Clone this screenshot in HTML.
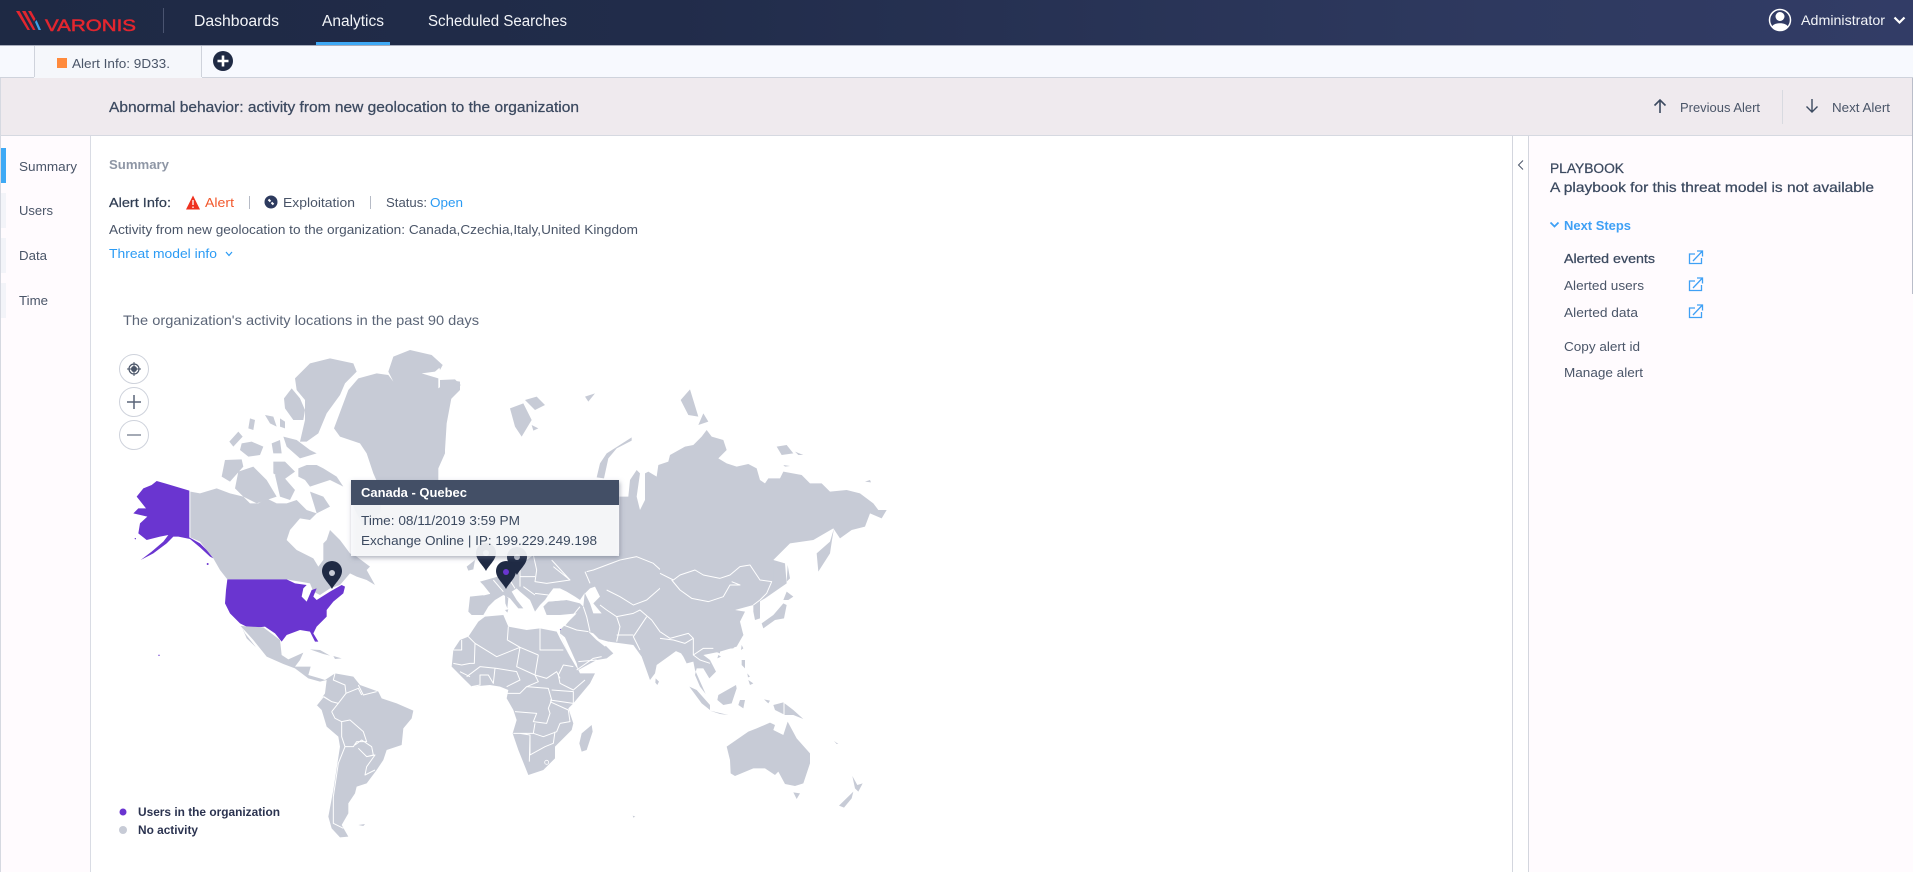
<!DOCTYPE html>
<html lang="en"><head><meta charset="utf-8"><title>Alert Info</title>
<style>
html,body{margin:0;padding:0;background:#fff;width:1913px;height:872px;overflow:hidden}
svg{display:block}
text{font-family:"Liberation Sans",Arial,sans-serif;font-size:13px;fill:#4a5568}
.n{font-size:15.5px;fill:#f2f4f8}
.d{fill:#3c4a60}
.m{stroke:#3c4a60;stroke-width:.25}
.b{font-weight:bold}
.l{fill:#2b9bf4}
.land{fill:#c7cbd6}
.sea{fill:#fff}
.br{fill:none;stroke:#fff;stroke-width:3;stroke-linejoin:round}
.pu{fill:#6a35d0}
.pin{fill:#1f2a44}
</style></head><body>
<svg width="1913" height="872" viewBox="0 0 1913 872" xmlns="http://www.w3.org/2000/svg">
<defs>
<linearGradient id="hg" x1="0" x2="1" y1="0" y2="0"><stop offset="0" stop-color="#1e2944"/><stop offset=".35" stop-color="#212c4a"/><stop offset=".78" stop-color="#2e395f"/><stop offset="1" stop-color="#323c66"/></linearGradient>
<filter id="sh" x="-10%" y="-20%" width="120%" height="140%"><feDropShadow dx="1" dy="2" stdDeviation="2.5" flood-color="#5a6278" flood-opacity=".55"/></filter>
<path id="pinp" d="M0,17C-3,11 -10,6 -10,-1A10,10 0 1 1 10,-1C10,6 3,11 0,17Z"/>
</defs>

<!-- panels -->
<rect width="1913" height="872" fill="#fff"/>
<rect y="0" width="1913" height="45" fill="url(#hg)"/>
<rect y="45" width="1913" height="1" fill="#a9aebd"/>
<rect y="46" width="1913" height="31" fill="#f7f9fe"/>
<rect y="77" width="1913" height="1" fill="#cfd3dc"/>
<rect x="34" y="46" width="168" height="32" fill="#f5f7fb"/>
<path d="M34.5,46V77M201.5,46V77" stroke="#cfd3dc" fill="none"/>
<rect y="78" width="1913" height="57" fill="#efeaee"/>
<rect y="135" width="1913" height="1" fill="#d6d9e1"/>
<rect y="136" width="90" height="736" fill="#fffbfe"/>
<rect x="90" y="136" width="1" height="736" fill="#d9dce4"/>
<rect x="0" y="78" width="1" height="794" fill="#d6d9e1"/>
<rect x="1512" y="136" width="1" height="736" fill="#d3d6de"/>
<rect x="1528" y="136" width="385" height="736" fill="#fffbfe"/>
<rect x="1528" y="136" width="1" height="736" fill="#d3d6de"/>
<rect x="1912" y="78" width="1" height="216" fill="#b9bdc9"/>

<!-- header -->
<g>
<path d="M16,11H19.500L30,30H27.500ZM22,11H25.500L35.500,30H33ZM28,11H31L35.500,19L34,21.500Z" fill="#e3262f"/>
<path d="M35,22L36.500,20L41,30H38.500Z" fill="#3fa0e8"/>
<text x="45" y="31" textLength="91" lengthAdjust="spacingAndGlyphs" style="font-size:16.5px;font-weight:normal;fill:#e3262f;stroke:#e3262f;stroke-width:.5">VARONIS</text>
</g>
<rect x="163" y="8" width="1" height="25" fill="#4a5470"/>
<text class="n" x="194" y="26" textLength="85" lengthAdjust="spacingAndGlyphs">Dashboards</text>
<text class="n" x="322" y="26" textLength="62" lengthAdjust="spacingAndGlyphs">Analytics</text>
<text class="n" x="428" y="26" textLength="139" lengthAdjust="spacingAndGlyphs">Scheduled Searches</text>
<rect x="316" y="42" width="74" height="3" fill="#3fa9f5"/>
<circle cx="1780" cy="20" r="10.500" fill="none" stroke="#fff" stroke-width="1.500"/>
<circle cx="1780" cy="16.500" r="4.500" fill="#fff"/>
<path d="M1772,27C1773,22 1787,22 1788,27A10.500,10.500 0 0 1 1772,27Z" fill="#fff"/>
<text class="n" x="1801" y="25" textLength="84" lengthAdjust="spacingAndGlyphs" style="font-size:14px">Administrator</text>
<path d="M1894.500,17.500L1899.500,22.500L1904.500,17.500" fill="none" stroke="#fff" stroke-width="2.200"/>

<!-- tabs -->
<rect x="57" y="58" width="10" height="10" fill="#ff8a3c"/>
<text x="72" y="68" textLength="98" lengthAdjust="spacingAndGlyphs">Alert Info: 9D33.</text>
<circle cx="223" cy="61" r="10" fill="#1f2a44"/>
<path d="M223,55.500V66.500M217.500,61H228.500" stroke="#fff" stroke-width="2.600"/>

<!-- title bar -->
<text class="d m" x="109" y="112" textLength="470" lengthAdjust="spacingAndGlyphs" style="font-size:14.500px">Abnormal behavior: activity from new geolocation to the organization</text>
<path d="M1660,113V100M1654.500,105.500L1660,100L1665.500,105.500" fill="none" stroke="#3c4a60" stroke-width="1.600"/>
<text x="1680" y="112" textLength="80" lengthAdjust="spacingAndGlyphs">Previous Alert</text>
<rect x="1782" y="90" width="1" height="34" fill="#d8dae0"/>
<path d="M1812,99V112M1806.500,106.500L1812,112L1817.500,106.500" fill="none" stroke="#3c4a60" stroke-width="1.400"/>
<text x="1832" y="112" textLength="58" lengthAdjust="spacingAndGlyphs">Next Alert</text>

<!-- sidebar -->
<rect x="1" y="148" width="5" height="35" fill="#3fa9f5"/>
<rect x="1" y="193" width="5" height="35" fill="#f3f4f9"/>
<rect x="1" y="238" width="5" height="35" fill="#f3f4f9"/>
<rect x="1" y="283" width="5" height="35" fill="#f3f4f9"/>
<text x="19" y="171" textLength="58" lengthAdjust="spacingAndGlyphs">Summary</text>
<text x="19" y="215" textLength="34" lengthAdjust="spacingAndGlyphs">Users</text>
<text x="19" y="260" textLength="28" lengthAdjust="spacingAndGlyphs">Data</text>
<text x="19" y="305" textLength="29" lengthAdjust="spacingAndGlyphs">Time</text>

<!-- summary -->
<text class="b" x="109" y="169" textLength="60" lengthAdjust="spacingAndGlyphs" style="fill:#8e96a5">Summary</text>
<text class="d m" x="109" y="207" textLength="62" lengthAdjust="spacingAndGlyphs" style="fill:#2f3b50">Alert Info:</text>
<path d="M193,195.500L200,209.500H186Z" fill="#ee3220"/>
<path d="M193,200V205M193,206.500V208" stroke="#fff" stroke-width="1.300"/>
<text x="205" y="207" textLength="29" lengthAdjust="spacingAndGlyphs" style="fill:#f2582c">Alert</text>
<rect x="249" y="196" width="1" height="13" fill="#b6bbc6"/>
<circle cx="271" cy="202" r="6.500" fill="#2d3a5e"/>
<path d="M268.500,199.500l2,2M271.500,202.500l2,2" stroke="#fff" stroke-width="2"/>
<text x="283" y="207" textLength="72" lengthAdjust="spacingAndGlyphs">Exploitation</text>
<rect x="370" y="196" width="1" height="13" fill="#b6bbc6"/>
<text x="386" y="207" textLength="41" lengthAdjust="spacingAndGlyphs">Status:</text>
<text class="l" x="430" y="207" textLength="33" lengthAdjust="spacingAndGlyphs">Open</text>
<text x="109" y="234" textLength="529" lengthAdjust="spacingAndGlyphs">Activity from new geolocation to the organization: Canada,Czechia,Italy,United Kingdom</text>
<text class="l" x="109" y="258" textLength="108" lengthAdjust="spacingAndGlyphs">Threat model info</text>
<path d="M226,252L229,255.500L232,252" fill="none" stroke="#2b9bf4" stroke-width="1.200"/>
<text x="123" y="325" textLength="356" lengthAdjust="spacingAndGlyphs" style="font-size:14px;fill:#5c6678">The organization's activity locations in the past 90 days</text>

<!-- zoom controls -->
<g fill="#fff" stroke="#cfd3dc"><circle cx="134" cy="369" r="14.500"/><circle cx="134" cy="402" r="14.500"/><circle cx="134" cy="435" r="14.500"/></g>
<circle cx="134" cy="369" r="3" fill="#4a5568"/><circle cx="134" cy="369" r="5" fill="none" stroke="#4a5568" stroke-width="1.200"/>
<path d="M134,362V376M127,369H141" stroke="#4a5568" stroke-width="1"/>
<path d="M127,402H141M134,395V409" stroke="#5a6578" stroke-width="1.500"/>
<path d="M127,435H141" stroke="#9aa0ad" stroke-width="1.800"/>

<!-- MAP: North America (crop coords x3 at 110,340) -->
<g transform="translate(110 340) scale(.33333)">
<path class="pu" d="M140,423L165,430L238,452V592L270,610L295,635L310,655L300,650L270,622L240,597L205,590L190,590L170,610L130,640L92,660L125,635L160,605L175,585L150,590L110,600L85,580L90,550L112,530L70,520L85,505L108,505L80,470L100,445L125,435Z"/>
<path class="land" d="M241,455L270,460L320,445L360,460L400,470L420,490L445,490L470,475L500,490L530,490L560,480L590,510L620,520L600,540L570,535L540,570L530,600L560,630L610,655L625,680L640,660L640,610L650,600L660,570L690,600L720,640L740,650L780,680L770,690L795,735L770,720L740,710L720,700L690,735L660,745L630,765L610,755L600,730L570,725L550,722L530,718H352L330,690L310,655L290,630L270,605L241,592Z"/>
<path class="land" d="M345,360L395,358L400,380L360,425L335,410ZM385,395L430,380L470,420L500,470L470,480L440,490L400,470L375,445ZM358,305L385,275L398,290L370,320ZM395,310L425,305L460,320L450,345L415,350L390,330ZM485,310L510,300L515,340L490,340ZM520,290L560,300L600,330L620,340L570,355L530,320ZM465,225L490,230L500,260L480,250ZM510,235L525,245L525,265L510,260ZM420,235L435,240L430,270L415,265ZM490,365L525,365L555,395L520,420L490,400ZM495,405L520,410L555,450L540,480L510,470ZM565,385L590,375L620,375L640,385L680,410L700,440L660,420L600,440L585,420L565,410Z"/>
<path class="land" d="M555,115L600,70L660,55L730,70L740,95L705,130L690,165L650,220L625,280L590,305L570,305L585,240L585,180L560,150ZM522,175L545,145L570,175L585,210L580,240L550,240L525,205Z"/>
<path class="land" d="M672,265L715,150L745,115L800,100L835,105L850,125L835,95L850,50L900,30L965,45L998,75L975,95L935,100L985,115L985,145L1020,120L1050,125L1050,150L1010,190L1005,290L1005,340L985,385L985,420L950,445L810,445L790,400L770,340L750,310L690,290Z"/>
<path class="land" d="M725,470L820,450L810,520L760,560L730,500ZM600,455L640,470L660,500L620,520Z"/>
<path class="pu" d="M352,718H530L555,730L590,735L580,745L575,770L590,785L605,750L620,745L610,770L620,780L660,755L695,735L705,740L700,760L670,785L650,810L650,830L620,860L610,880L625,905L615,905L600,875L570,870L530,885L515,905L495,880L465,860L420,865L390,850L360,820L345,790L348,750Z"/>
<circle class="pu" cx="147" cy="946" r="2"/>
<circle class="pu" cx="76" cy="596" r="2"/><circle class="pu" cx="293" cy="672" r="3"/>
</g>

<!-- MAP: Central + South America (crop coords x3 at 220,590) -->
<g transform="translate(220 590) scale(.33333)">
<path class="land" d="M62,108L130,112L180,150L185,195L205,208L250,188L240,210L225,230L272,230L265,255L300,265L315,270L345,250L400,260L420,285L475,305L485,325L530,340L580,362L575,385L550,415L545,465L500,480L490,510L470,540L440,580L410,590L405,610L385,640L385,670L365,705L385,740L360,742L335,715L325,680L340,600L360,470L355,440L320,410L305,360L290,345L315,310L320,270L300,275L265,265L225,235L190,222L140,200L100,150Z"/>
<path class="land" d="M65,110L75,130L108,172L80,145ZM270,178L300,180L330,197L310,192ZM340,198L365,205L345,207ZM415,705L435,702L430,708Z"/>
<path class="br" d="M345,250L340,270L375,285L378,310L355,340L335,335L312,320M290,345L310,320L335,335M335,365L345,385L365,395L365,440L375,470M365,395L390,390L430,425L440,455L410,455L400,470L375,470M405,465L425,450L455,470L460,495L440,500L415,475M375,470L355,520L340,620L340,700L370,715M440,500L465,495L440,530L435,555L465,540M415,285L430,315L470,305M378,310L415,295L425,315M335,365L355,340"/>
</g>

<!-- MAP: Eurasia north (crop coords x3 at 440,340) -->
<g transform="translate(440 340) scale(.33333)">
<path class="land" d="M538,470L565,470L570,420L590,390L600,400L590,470L600,510L615,480L615,400L625,395L650,410L655,375L685,365L690,345L735,320L760,315L785,290L800,270L815,290L850,300L860,330L835,355L860,370L890,380L925,372L950,385L960,420L975,430L985,415L1020,415L1030,395L1085,405L1110,430L1145,430L1170,455L1220,450L1260,460L1300,490L1315,510L1340,510L1325,535L1290,520L1275,560L1235,570L1200,595L1180,565L1120,600L1050,610L1000,660L1035,670L1040,730L975,775L940,795L885,810L910,885L880,925L800,930L700,900L540,880L470,830L430,800L440,700L538,640Z"/>
<path class="land" d="M1182,565L1170,605L1130,640L1135,695L1170,640L1176,600ZM210,205L250,190L275,240L245,290L225,260ZM255,180L290,170L315,195L285,210ZM275,255L295,265L280,272ZM435,170L465,160L445,185ZM470,412L480,370L500,340L575,292L575,302L530,325L505,355L492,415ZM722,180L750,148L775,230L745,225ZM775,255L790,220L805,245ZM1010,320L1040,315L1060,340L1025,345ZM1065,335L1090,345L1075,345ZM1030,375L1050,378L1035,380ZM1275,425L1290,420L1293,427Z"/>
<path class="land" d="M-5,70L8,75L0,90ZM0,120L45,118L62,135L35,170L20,250L15,330L0,370Z"/>
</g>

<!-- MAP: Europe, Middle East, Africa, South Asia (crop coords x3 at 420,550) -->
<g transform="translate(420 550) scale(.33333)">
<path class="land" d="M180,95L215,85L250,75L300,45L340,15H600V90L500,120L480,150L465,140L440,125L420,115L400,115L385,135L375,150L360,165L345,185L330,150L300,125L290,115L275,125L290,150L310,175L295,175L270,145L250,135L225,150L205,170L190,195L155,195L145,185L150,140L195,135L210,130L190,105Z"/>
<path class="land" d="M140,50L165,30L160,58L145,62ZM255,135L265,145L262,175L256,160ZM255,180L265,178L262,188ZM370,170L385,155L440,150L480,160L500,180L470,190L420,195L380,195Z"/>
<path class="land" d="M420,240L435,225L470,190L480,165L500,180L505,245L530,270L555,285L580,310L560,325L530,330L475,360L465,340L440,300L420,250Z"/>
<path class="land" d="M490,170L505,245L530,265L565,275L640,285L665,320L690,390L705,370L710,345L745,320L775,298L790,320L800,340L820,310L860,295L900,310V200L600,180Z"/>
<path class="land" d="M145,260L175,215L195,200L250,195L265,230L320,240L360,235L410,245L420,265L450,320L475,360L480,370L525,370L510,400L460,460L445,475L460,520L455,540L425,570L405,590L405,625L370,660L325,675L315,650L295,600L278,550L290,510L280,480L260,445L265,420L240,410L210,405L155,410L130,385L95,350L100,300L120,270Z"/>
<path class="land" d="M515,525L518,545L500,600L485,605L478,580L485,550ZM707,385L717,395L712,405L706,398ZM638,797L646,800L640,803Z"/>
<path class="sea" d="M375,155L395,135L410,115L430,130L465,145L475,155L440,150L385,155ZM510,115L525,110L540,140L520,160L545,190L520,190L510,160L495,130ZM505,245L520,250L550,280L570,275L555,290L530,270ZM420,250L435,262L470,340L475,360L465,345L440,300Z"/>
<path class="br" d="M145,260L165,280L230,320L300,292L355,315M165,280L163,340L150,340L125,345L100,340M100,300L125,300L125,270M265,230L262,270L300,292L290,350L345,375M360,235V300H430M355,315L345,375L380,385L410,365L420,385M460,350L430,345L415,375L420,400L460,420L495,390M345,375L355,395L320,410L300,430L260,430M320,410L385,415L395,450L385,475L390,490L380,520L340,515L350,490L285,485M395,420L460,425V460L390,450M390,455L445,480L450,515L420,520M280,550H340L345,520M340,550L370,560L410,545L420,520M330,555V615L375,590L400,580L405,545M300,550L330,555L328,635M140,380L180,350L230,355L290,365L300,390L260,410M225,355L220,400L205,375H180V405L155,410M120,365L150,380M470,360L520,325L545,320M475,335L530,330"/>
<circle cx="380" cy="637" r="6" fill="none" stroke="#fff" stroke-width="2.500"/>
<path class="br" d="M500,65L520,60L600,30L650,20L700,40L755,90M755,90L720,115L680,150L640,165L600,140L560,120M495,65L510,100M590,200L600,230L590,275M540,165L560,180L590,200L640,190L660,180L695,210L720,245L770,265L810,250M680,200L640,260L660,300M590,255H640M490,170L500,200L510,245M430,225L470,240L505,245M435,225L480,170"/>
<path class="br" d="M300,45V110M340,15L350,60L345,95L380,100L450,90M400,50L450,90L395,30M260,75L285,115M300,80H345M310,110L345,135M345,130L385,135M220,90L250,125M190,135L210,130"/>
<circle class="pu" cx="421" cy="238" r="1.500"/>
</g>

<!-- MAP: East Asia + Oceania (crop coords x3 at 660,540) -->
<g transform="translate(660 540) scale(.33333)">
<path class="land" d="M40,330L75,345L80,370L100,365L105,390L125,435L137,462L120,440L105,405L110,385L130,385L148,415L168,395L150,360L130,345L180,335L230,320L250,285L240,245L255,215L225,210L250,190L300,170L340,130V60L0,60V360Z"/>
<path class="land" d="M280,195L300,180L300,235L285,240L280,215ZM305,250L340,225L370,190L380,195L372,235L345,240L310,265ZM370,180L380,155L400,170L385,180ZM383,75L390,115L380,125ZM245,360L255,360L255,385L245,375ZM265,420L280,430L270,435ZM262,400L270,410L264,412ZM245,315L250,325L243,330ZM175,345L183,350L172,355ZM88,440L110,450L150,495L150,510L125,490ZM150,512L205,525L180,522ZM175,465L210,445L228,435L230,445L215,490L190,495L172,480ZM240,480L255,480L250,505L235,495ZM340,495L370,487L400,510L430,537L400,525L375,525L345,510ZM312,478L330,482L325,490Z"/>
<path class="land" d="M200,620L265,575L290,565L330,548L345,555L340,570L370,585L383,545L410,595L450,640V670L430,730L405,738L375,732L355,695L345,705L315,685L280,685L225,708L212,700L210,660ZM400,757L420,760L410,777ZM537,797L580,755L575,775L552,803ZM577,708L592,735L608,730L595,755L585,745ZM522,603L535,612L530,612Z"/>
<path class="br" d="M0,100L40,120L60,105L105,90L130,105L180,115L210,105L240,80L270,75L300,120L335,125L320,160L300,180L280,195M35,120L60,150L95,175L145,185L190,170L210,135L240,135L215,125M0,275L30,295L85,280L100,295L75,310L40,300L0,295M100,295L100,345L130,325L160,325M100,345L120,360L150,370M372,487V525"/>
</g>

<!-- pins -->
<use href="#pinp" class="pin" x="486" y="554"/><circle cx="486" cy="553" r="3" fill="#c7cbd6"/>
<use href="#pinp" class="pin" x="517" y="558"/><circle cx="517" cy="557" r="3" fill="#c7cbd6"/>
<use href="#pinp" class="pin" x="506" y="572"/><circle cx="506" cy="572" r="3" fill="#6a35d0"/>
<use href="#pinp" class="pin" x="332" y="572"/><circle cx="332" cy="573" r="3" fill="#c7cbd6"/>

<!-- tooltip -->
<rect x="351" y="480" width="268" height="76" fill="#f9fafd" fill-opacity=".88" filter="url(#sh)"/>
<rect x="351" y="480" width="268" height="25" fill="#434f66"/>
<text class="b" x="361" y="497" textLength="106" lengthAdjust="spacingAndGlyphs" style="fill:#fff">Canada - Quebec</text>
<text class="d" x="361" y="525" textLength="159" lengthAdjust="spacingAndGlyphs">Time: 08/11/2019 3:59 PM</text>
<text class="d" x="361" y="545" textLength="236" lengthAdjust="spacingAndGlyphs">Exchange Online | IP: 199.229.249.198</text>

<!-- legend -->
<circle class="pu" cx="123" cy="812" r="3.500"/>
<text class="b" x="138" y="816" textLength="142" lengthAdjust="spacingAndGlyphs" style="font-size:12px;fill:#2b3350">Users in the organization</text>
<circle class="land" cx="123" cy="830" r="4"/>
<text class="b" x="138" y="834" textLength="60" lengthAdjust="spacingAndGlyphs" style="font-size:12px;fill:#2b3350">No activity</text>

<!-- right panel -->
<path d="M1523,160.500L1518.500,165L1523,169.500" fill="none" stroke="#4a5568" stroke-width="1"/>
<text class="d m" x="1550" y="173" textLength="74" lengthAdjust="spacingAndGlyphs" style="font-size:13.500px">PLAYBOOK</text>
<text class="d m" x="1550" y="192" textLength="324" lengthAdjust="spacingAndGlyphs" style="font-size:14px">A playbook for this threat model is not available</text>
<path d="M1550.500,222.500L1554.500,226.500L1558.500,222.500" fill="none" stroke="#3fa0f5" stroke-width="1.800"/>
<text class="b" x="1564" y="230" textLength="67" lengthAdjust="spacingAndGlyphs" style="fill:#3fa0f5">Next Steps</text>
<text class="d m" x="1564" y="263" textLength="91" lengthAdjust="spacingAndGlyphs">Alerted events</text>
<text x="1564" y="290" textLength="80" lengthAdjust="spacingAndGlyphs">Alerted users</text>
<text x="1564" y="317" textLength="74" lengthAdjust="spacingAndGlyphs">Alerted data</text>
<text x="1564" y="351" textLength="76" lengthAdjust="spacingAndGlyphs">Copy alert id</text>
<text x="1564" y="377" textLength="79" lengthAdjust="spacingAndGlyphs">Manage alert</text>
<g fill="none" stroke="#3fa0f5" stroke-width="1.300">
<path d="M1695,254H1689.500V263.500H1701.500V258M1693,261L1702,251.500M1697,251H1702.500V256.500"/>
<path d="M1695,281H1689.500V290.500H1701.500V285M1693,288L1702,278.500M1697,278H1702.500V283.500"/>
<path d="M1695,308H1689.500V317.500H1701.500V312M1693,315L1702,305.500M1697,305H1702.500V310.500"/>
</g>
</svg>
</body></html>
